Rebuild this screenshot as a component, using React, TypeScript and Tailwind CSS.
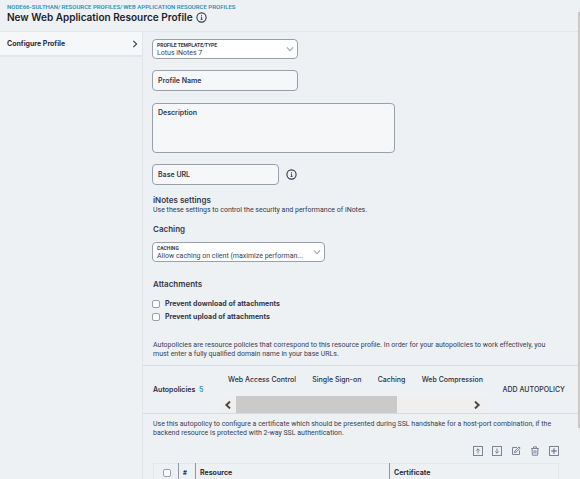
import React from 'react';

interface SelectBoxProps {
  id: string;
  label: string;
  value: string;
  className: string;
}

const tabs = ['Web Access Control', 'Single Sign-on', 'Caching', 'Web Compression'];

function InfoIcon() {
  return (
    <svg className="block size-[11px]" viewBox="0 0 11 11" fill="none" stroke="#34384a">
      <circle cx="5.5" cy="5.5" r="4.6" strokeWidth="1.1" />
      <path d="M4.9 5.2H5.6V7.4M4.6 7.4H6.6" strokeWidth="0.9" />
      <path d="M5 3.8H6" strokeWidth="1" />
    </svg>
  );
}

function Chevron({ className }: { className: string }) {
  return (
    <svg className={className} viewBox="0 0 8 8" fill="none" stroke="currentColor" strokeWidth="1.1">
      <path d="M2.3 0.9L5.6 4L2.3 7.1" />
    </svg>
  );
}

function SelectBox({ id, label, value, className }: SelectBoxProps) {
  return (
    <div className={`relative flex h-[20px] flex-col rounded-[4px] border border-[#9a9fac] bg-white pl-1 pt-[2px] ${className}`}>
      <label htmlFor={id} className="font-['Roboto','Liberation_Sans',sans-serif] text-[5px] font-bold leading-[6px] text-[#34384a]">
        {label}
      </label>
      <select
        id={id}
        defaultValue={value}
        className="h-[10px] w-full appearance-none bg-transparent pr-3 font-['Roboto','Liberation_Sans',sans-serif] text-[7px] font-normal leading-[10px] text-[#3c4052] outline-none"
      >
        <option>{value}</option>
      </select>
      <Chevron className="pointer-events-none absolute right-[3px] top-[5px] size-[8px] rotate-90 text-[#a3a7b1]" />
    </div>
  );
}

function TextBox({ label, className }: { label: string; className: string }) {
  return (
    <label className={`flex h-[21px] items-center gap-1 rounded-[4px] border border-[#9a9fac] bg-[#f6f7f9] px-[5px] ${className}`}>
      <span className="whitespace-nowrap">{label}</span>
      <input type="text" className="min-w-0 flex-1 bg-transparent outline-none" />
    </label>
  );
}

function CheckRow({ label }: { label: string }) {
  return (
    <label className="flex h-[13px] items-center gap-[5px] font-bold">
      <CheckBox />
      {label}
    </label>
  );
}

function CheckBox({ label }: { label?: string }) {
  return (
    <input
      type="checkbox"
      aria-label={label}
      className="block size-[8px] appearance-none rounded-[2px] border border-[#9a9fac] bg-white"
    />
  );
}

const actions = [
  {
    name: 'Move up',
    icon: (
      <>
        <rect x="0.5" y="0.5" width="9" height="9" />
        <path d="M5 7.5V2.8M3.2 4.6L5 2.8L6.8 4.6" />
      </>
    ),
  },
  {
    name: 'Move down',
    icon: (
      <>
        <rect x="0.5" y="0.5" width="9" height="9" />
        <path d="M5 2.5V7.2M3.2 5.4L5 7.2L6.8 5.4" />
      </>
    ),
  },
  {
    name: 'Edit',
    icon: (
      <>
        <path d="M6 1.5H1.5V8.5H8.5V4.5" />
        <path d="M3.4 6.7L3.8 5L8 1L9.2 2.1L5 6.2Z" />
      </>
    ),
  },
  {
    name: 'Delete',
    icon: (
      <>
        <path d="M1.2 2.5H8.8M3.5 2.3V0.9H6.5V2.3" />
        <path d="M2 2.7L2.4 9.2H7.6L8 2.7" />
        <path d="M4.1 4.2V7.6M5.9 4.2V7.6" />
      </>
    ),
  },
  {
    name: 'Add',
    icon: (
      <>
        <rect x="0.5" y="0.5" width="9" height="9" />
        <path d="M5 2.3V7.7M2.3 5H7.7" strokeWidth="1.3" />
      </>
    ),
  },
];

export default function App() {
  return (
    <div className="flex h-screen overflow-hidden bg-[#edf1f4] font-['Inter','Liberation_Sans',sans-serif] text-[7px] leading-[9px] text-[#3c4052]">
      <div className="flex min-w-0 flex-1 flex-col">
        <header className="h-8 shrink-0 border-b border-[#e3e7ec] pl-[7px] pt-[3px]">
          <nav className="flex gap-px font-['Roboto','Liberation_Sans',sans-serif] text-[6px] font-semibold leading-[8px] text-[#2e93b5]">
            <a href="#node">NODE66-SULTHAN/</a>
            <a href="#profiles">RESOURCE PROFILES/</a>
            <a href="#web">WEB APPLICATION RESOURCE PROFILES</a>
          </nav>
          <div className="flex items-center gap-[3px]">
            <h1 className="text-[10px] font-semibold leading-[12px] text-[#1b1d2b]">New Web Application Resource Profile</h1>
            <button type="button" aria-label="About this page">
              <InfoIcon />
            </button>
          </div>
        </header>

        <div className="flex min-h-0 flex-1">
          <aside className="w-[143px] shrink-0 border-r border-[#e1e5ea]">
            <a
              href="#configure"
              className="flex h-[25px] items-center justify-between border-b-2 border-[#e3e6ea] bg-[#f6f7f9] pl-[7px] pr-[3px] font-bold text-[#2b2e3e]"
            >
              Configure Profile
              <Chevron className="size-[8px] text-[#34384a]" />
            </a>
          </aside>

          <main className="min-w-0 flex-1">
            <form className="px-[9px] pt-[7px] font-semibold text-[#34384a]">
              <SelectBox id="template" label="PROFILE TEMPLATE/TYPE" value="Lotus iNotes 7" className="w-[146px]" />
              <TextBox label="Profile Name" className="mt-[11px] w-[146px]" />
              <label className="mt-3 flex h-[50px] w-[243px] flex-col rounded-[4px] border border-[#9a9fac] bg-[#f6f7f9] px-[5px] pt-1">
                Description
                <textarea className="min-h-0 flex-1 resize-none bg-transparent outline-none" />
              </label>
              <div className="mt-[11px] flex items-center gap-[7px]">
                <TextBox label="Base URL" className="w-[127px]" />
                <button type="button" aria-label="About the base URL">
                  <InfoIcon />
                </button>
              </div>

              <h2 className="mt-[10px] pl-px text-[8px] leading-[10px]">iNotes settings</h2>
              <p className="pl-px font-['Roboto','Liberation_Sans',sans-serif] font-normal leading-[10px]">
                Use these settings to control the security and performance of iNotes.
              </p>
              <h3 className="mt-[9px] pl-px text-[8px] leading-[10px]">Caching</h3>
              <SelectBox
                id="caching"
                label="CACHING"
                value="Allow caching on client (maximize performan..."
                className="mt-2 w-[173px]"
              />
              <h3 className="mb-2 mt-[17px] pl-px text-[8px] leading-[10px]">Attachments</h3>
              <CheckRow label="Prevent download of attachments" />
              <CheckRow label="Prevent upload of attachments" />
            </form>

            <p className="mt-[18px] pl-[10px] pr-[18px] font-['Roboto','Liberation_Sans',sans-serif]">
              Autopolicies are resource policies that correspond to this resource profile. In order for your autopolicies to work
              effectively, you must enter a fully qualified domain name in your base URLs.
            </p>

            <section className="mt-[6px] flex h-[49px] items-center border-y border-[#d5dbe1] pl-[10px] pr-[13px]">
              <h3 className="w-[67px] shrink-0 font-semibold text-[#2b2e3e]">
                Autopolicies <span className="pl-[2px] text-[#2e93b5]">5</span>
              </h3>
              <div className="flex w-[267px] flex-col justify-between self-stretch pt-[9px]">
                <div className="flex justify-between pl-[8px] pr-1 font-medium text-[#2b2e3e]">
                  {tabs.map(tab => (
                    <button key={tab} type="button" className="whitespace-nowrap">
                      {tab}
                    </button>
                  ))}
                </div>
                <div className="flex h-[17px] items-center justify-between bg-[#efefef]">
                  <button type="button" aria-label="Scroll left" className="flex w-4 justify-center">
                    <svg className="size-[8px]" viewBox="0 0 8 8" fill="none" stroke="#484848" strokeWidth="2">
                      <path d="M6 0.6L2.4 4L6 7.4" />
                    </svg>
                  </button>
                  <div className="flex-1 self-stretch">
                    <div className="h-full w-[161px] bg-[#cacaca]"></div>
                  </div>
                  <button type="button" aria-label="Scroll right" className="flex w-5 justify-center">
                    <svg className="size-[8px]" viewBox="0 0 8 8" fill="none" stroke="#484848" strokeWidth="2">
                      <path d="M2 0.6L5.6 4L2 7.4" />
                    </svg>
                  </button>
                </div>
              </div>
              <button type="button" className="ml-auto whitespace-nowrap font-medium text-[#2b2e3e]">
                ADD AUTOPOLICY
              </button>
            </section>

            <p className="mt-[6px] pl-[10px] pr-[18px] font-['Roboto','Liberation_Sans',sans-serif]">
              Use this autopolicy to configure a certificate which should be presented during SSL handshake for a host-port
              combination, if the backend resource is protected with 2-way SSL authentication.
            </p>

            <div className="mt-2 flex justify-end gap-[9px] pr-[19px]">
              {actions.map(action => (
                <button key={action.name} type="button" aria-label={action.name}>
                  <svg className="block size-[10px]" viewBox="0 0 10 10" fill="none" stroke="#7c8496" strokeWidth="1">
                    {action.icon}
                  </svg>
                </button>
              ))}
            </div>

            <div className="mt-[7px] pl-[10px] pr-[19px]">
              <table className="w-full table-fixed border border-[#e3e7ec] text-left text-[#2b2e3e]">
                <thead>
                  <tr className="h-[18px]">
                    <th className="w-[25px] pl-[9px]">
                      <CheckBox label="Select all" />
                    </th>
                    <th className="w-[17px] border-l border-[#8f96a5] pl-1 text-[6px] font-bold">#</th>
                    <th className="w-[194px] border-l border-[#8f96a5] pl-1 font-bold">Resource</th>
                    <th className="border-l border-[#8f96a5] pl-1 font-bold">Certificate</th>
                  </tr>
                </thead>
              </table>
            </div>
          </main>
        </div>
      </div>

      <div className="w-[2px] shrink-0 bg-[#edf0f2] pt-3">
        <div className="h-[89%] bg-[#c9c9c9]"></div>
      </div>
    </div>
  );
}
